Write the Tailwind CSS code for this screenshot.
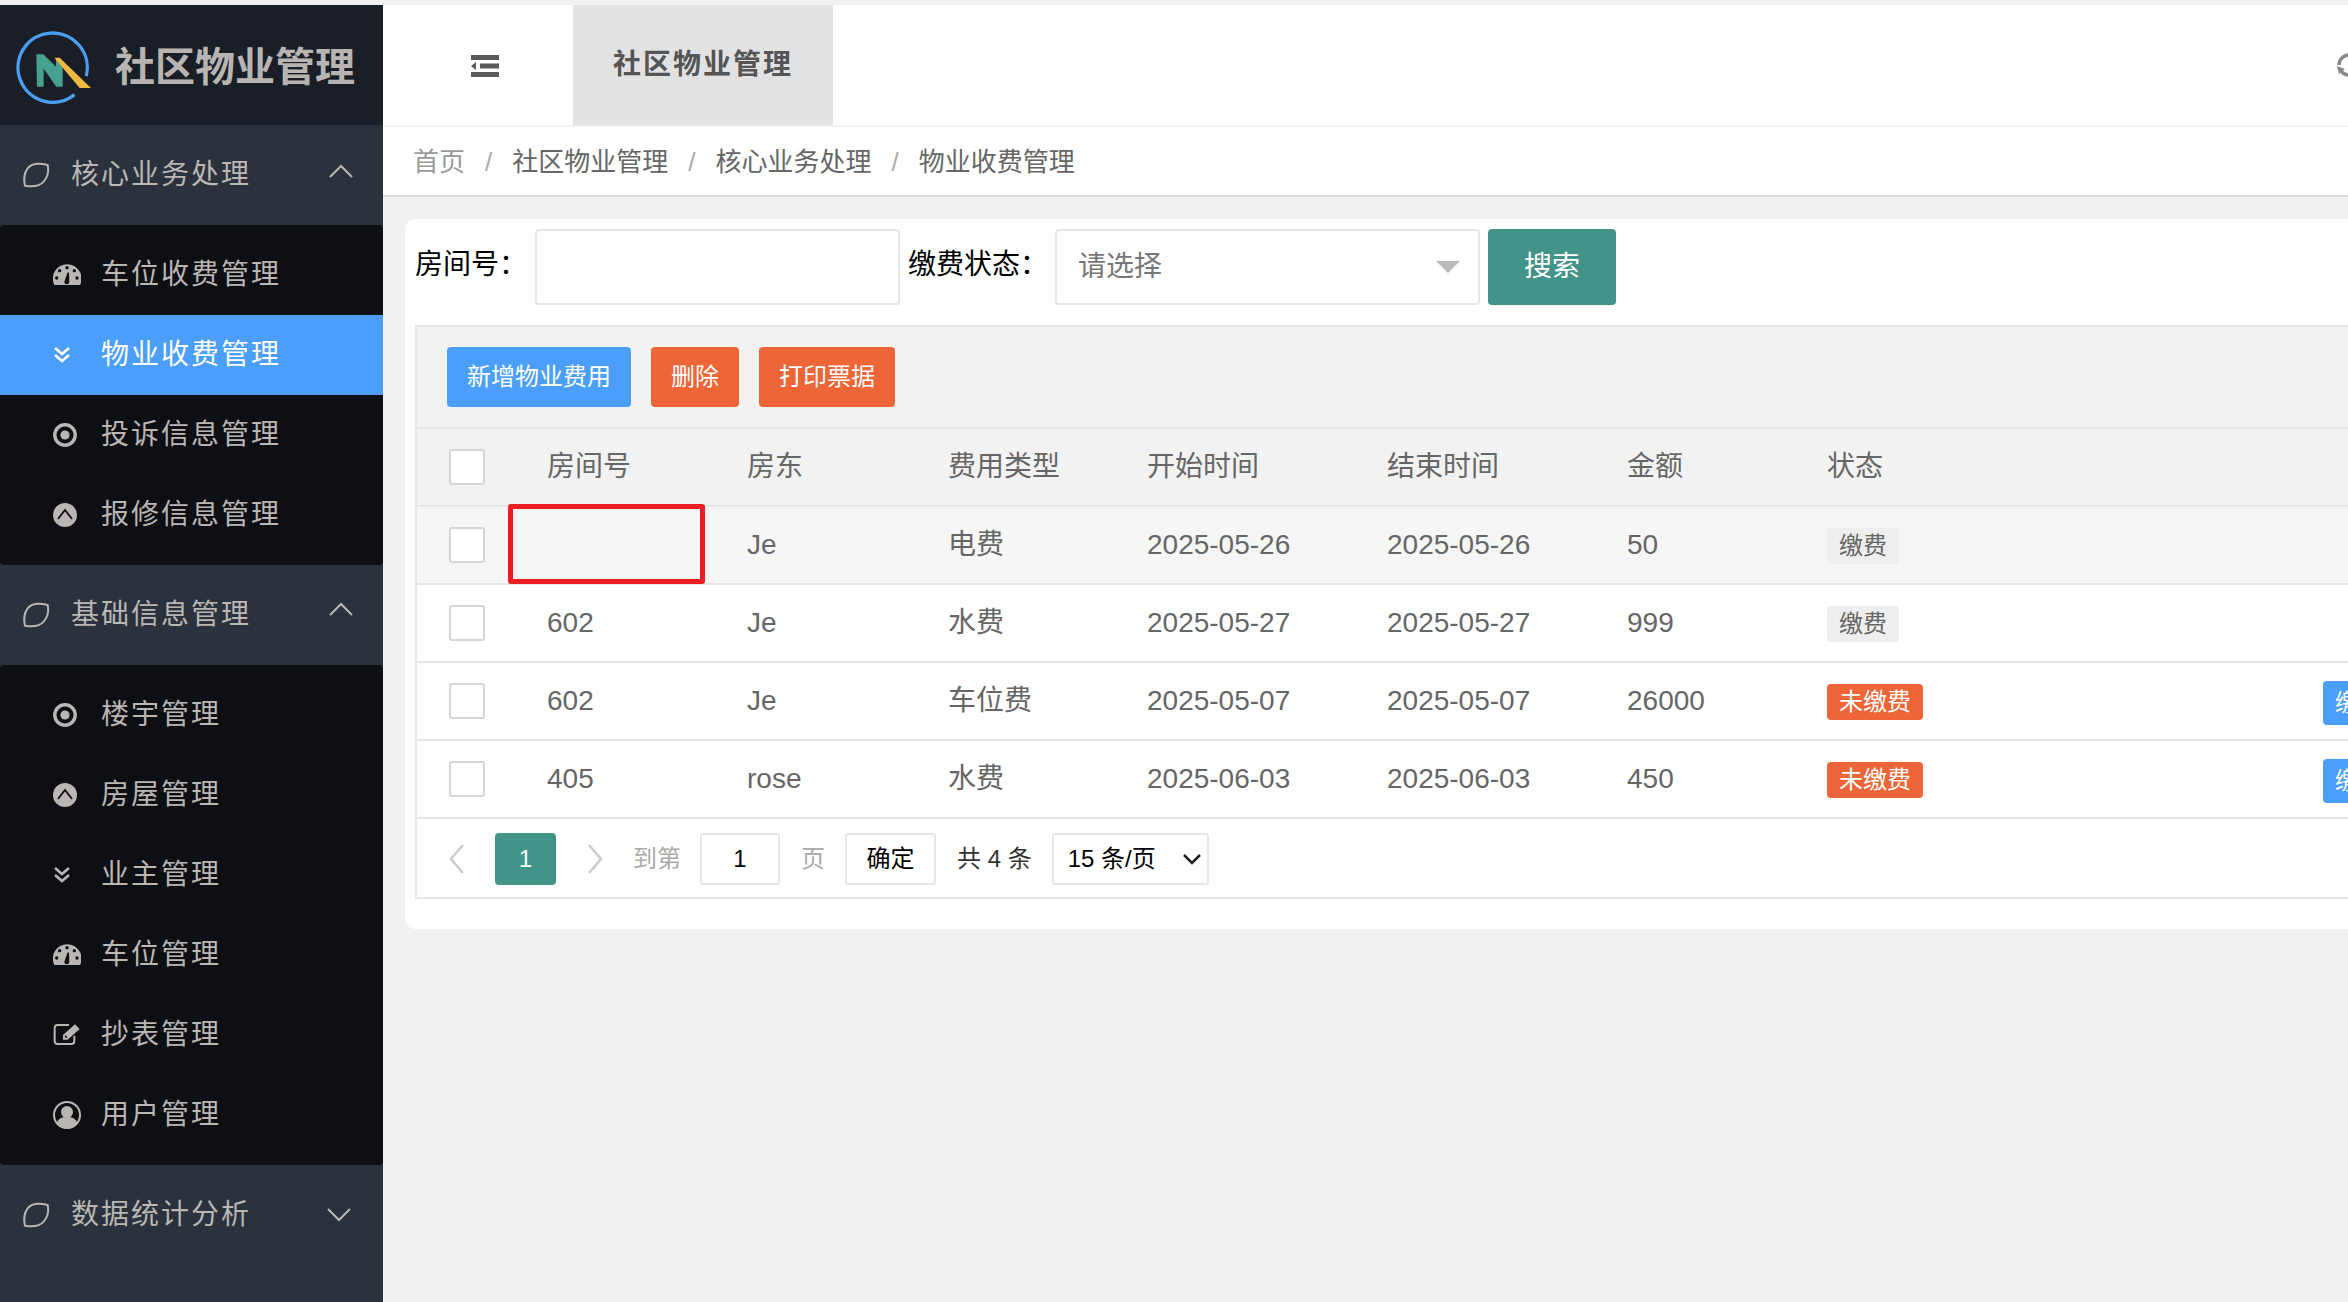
<!DOCTYPE html>
<html lang="zh-CN">
<head>
  <meta charset="UTF-8" />
  <title>社区物业管理</title>
  <script src="https://cdn.jsdelivr.net/npm/@tailwindcss/browser@4"></script>
</head>
<body class="w-[2348px] h-[1302px] overflow-hidden bg-[#f1f1f1] pt-[5px] font-['Liberation_Sans','Noto_Sans_CJK_SC',sans-serif] text-[28px] text-[#666]">

  <!-- icons -->
  <svg class="hidden">
    <symbol id="i-leaf" viewBox="0 0 120 120">
      <path d="M98 30C75 24 50 24 38 40C26 56 26 75 30 92C52 96 72 96 86 80C98 66 102 48 98 30Z" fill="none" stroke="currentColor" stroke-width="6" />
    </symbol>
    <symbol id="i-gauge" viewBox="25 18 84 84">
      <path d="M29 90A43 43 0 1 1 106 90Z" fill="currentColor" />
      <g fill="#0e0f13">
        <circle cx="36" cy="69" r="5" /><circle cx="45" cy="47" r="5" /><circle cx="67" cy="38" r="5" /><circle cx="89" cy="47" r="5" /><circle cx="97" cy="69" r="5" />
        <path d="M59 80L69 52L73 53L74 80A7.5 7.5 0 0 1 59 80Z" />
      </g>
    </symbol>
    <symbol id="i-down" viewBox="0 0 28 28">
      <path d="M2 7L9 13L16 7M2 14L9 20L16 14" fill="none" stroke="currentColor" stroke-width="2.6" />
    </symbol>
    <symbol id="i-dot" viewBox="0 0 28 28">
      <circle cx="12" cy="14" r="10.2" fill="none" stroke="currentColor" stroke-width="3.4" />
      <circle cx="12" cy="14" r="4.6" fill="currentColor" />
    </symbol>
    <symbol id="i-up" viewBox="0 0 28 28">
      <circle cx="12" cy="14" r="12" fill="currentColor" />
      <path d="M5 18L12 9L19 18" fill="none" stroke="#0e0f13" stroke-width="1.8" />
    </symbol>
    <symbol id="i-edit" viewBox="24 28 84 84">
      <path d="M88 72V88Q88 97 79 97H38Q29 97 29 88V49Q29 40 38 40H72" fill="none" stroke="currentColor" stroke-width="6" />
      <path d="M54 70L90 38L104 52L68 84H54Z" fill="currentColor" />
      <path d="M60 72L66 78" stroke="#0e0f13" stroke-width="4" />
    </symbol>
    <symbol id="i-user" viewBox="25 270 84 84">
      <circle cx="67" cy="312" r="39" fill="none" stroke="currentColor" stroke-width="6" />
      <circle cx="67" cy="303" r="18" fill="currentColor" />
      <path d="M36 338C40 322 52 318 67 318C82 318 94 322 98 338A39 39 0 0 1 36 338Z" fill="currentColor" />
    </symbol>
  </svg>

  <div class="flex h-[1297px]">
    <!-- sidebar -->
    <aside class="w-[383px] shrink-0 bg-[#2b323d] text-[#b9b6b3] tracking-[2px]">
      <div class="h-[120px] bg-[#1a1f27] flex items-center relative">
        <svg class="w-[90px] h-[85px] ml-[11px] mt-[7px]" viewBox="0 0 270 255">
          <path d="M225.900 150.200A104 104 0 1 0 190.400 205.800" fill="none" stroke="#4a9ff5" stroke-width="10" />
          <path d="M76 85H97L135 122V95L155 112V182H136L98 128V182H78Z" fill="#46a18f" />
          <path d="M130 95H146L240 186H206Z" fill="#f0b93f" />
        </svg>
        <span class="ml-[14px] mt-[3px] text-[40px] leading-none font-bold tracking-normal text-[#b7b4b1]">社区物业管理</span>
      </div>

      <div class="h-[100px] flex items-center pl-[15px]">
        <svg class="w-[40px] h-[40px] shrink-0"><use href="#i-leaf" /></svg>
        <span class="ml-[16px]">核心业务处理</span>
        <svg class="w-[24px] h-[14px] ml-auto mr-[30px] -mt-[9px]" viewBox="0 0 24 14"><path d="M1 13L12 2L23 13" fill="none" stroke="currentColor" stroke-width="2" /></svg>
      </div>
      <ul class="bg-[#0e0f13] py-[10px] rounded-[4px]">
        <li class="h-[80px] flex items-center pl-[53px] gap-[20px]"><svg class="w-[28px] h-[28px] shrink-0"><use href="#i-gauge" /></svg>车位收费管理</li>
        <li class="h-[80px] flex items-center pl-[53px] gap-[20px] bg-[#4b9ffa] text-white"><svg class="w-[28px] h-[28px] shrink-0"><use href="#i-down" /></svg>物业收费管理</li>
        <li class="h-[80px] flex items-center pl-[53px] gap-[20px]"><svg class="w-[28px] h-[28px] shrink-0"><use href="#i-dot" /></svg>投诉信息管理</li>
        <li class="h-[80px] flex items-center pl-[53px] gap-[20px]"><svg class="w-[28px] h-[28px] shrink-0"><use href="#i-up" /></svg>报修信息管理</li>
      </ul>

      <div class="h-[100px] flex items-center pl-[15px]">
        <svg class="w-[40px] h-[40px] shrink-0"><use href="#i-leaf" /></svg>
        <span class="ml-[16px]">基础信息管理</span>
        <svg class="w-[24px] h-[14px] ml-auto mr-[30px] -mt-[12px]" viewBox="0 0 24 14"><path d="M1 13L12 2L23 13" fill="none" stroke="currentColor" stroke-width="2" /></svg>
      </div>
      <ul class="bg-[#0e0f13] py-[10px] rounded-[4px]">
        <li class="h-[80px] flex items-center pl-[53px] gap-[20px]"><svg class="w-[28px] h-[28px] shrink-0"><use href="#i-dot" /></svg>楼宇管理</li>
        <li class="h-[80px] flex items-center pl-[53px] gap-[20px]"><svg class="w-[28px] h-[28px] shrink-0"><use href="#i-up" /></svg>房屋管理</li>
        <li class="h-[80px] flex items-center pl-[53px] gap-[20px]"><svg class="w-[28px] h-[28px] shrink-0"><use href="#i-down" /></svg>业主管理</li>
        <li class="h-[80px] flex items-center pl-[53px] gap-[20px]"><svg class="w-[28px] h-[28px] shrink-0"><use href="#i-gauge" /></svg>车位管理</li>
        <li class="h-[80px] flex items-center pl-[53px] gap-[20px]"><svg class="w-[28px] h-[28px] shrink-0"><use href="#i-edit" /></svg>抄表管理</li>
        <li class="h-[80px] flex items-center pl-[53px] gap-[20px]"><svg class="w-[28px] h-[28px] shrink-0"><use href="#i-user" /></svg>用户管理</li>
      </ul>

      <div class="h-[100px] flex items-center pl-[15px]">
        <svg class="w-[40px] h-[40px] shrink-0"><use href="#i-leaf" /></svg>
        <span class="ml-[16px]">数据统计分析</span>
        <svg class="w-[24px] h-[14px] ml-auto mr-[32px]" viewBox="0 0 24 14"><path d="M1 1L12 12L23 1" fill="none" stroke="currentColor" stroke-width="2" /></svg>
      </div>
    </aside>

    <!-- main -->
    <main class="flex-1 min-w-0 overflow-hidden">
      <div class="h-[122px] bg-white border-b-2 border-[#f2f2f2] flex items-stretch">
        <div class="w-[190px] flex items-center pl-[88px]">
          <svg class="w-[28px] h-[22px] mt-[2px] text-[#5a5a5a]" viewBox="0 0 28 22">
            <path d="M0 0H28V5H0ZM9 8.500H28V13.500H9ZM0 17H28V22H0Z" fill="currentColor" />
            <path d="M5 7V15L0 11Z" fill="currentColor" />
          </svg>
        </div>
        <div class="w-[260px] h-[120px] bg-[#e2e2e2] flex items-center justify-center font-bold text-[#555] tracking-[2px]">社区物业管理</div>
        <div class="ml-auto h-[120px] flex items-center">
          <svg class="w-[24px] h-[24px] -mr-[13px]" viewBox="0 0 24 24">
            <path d="M2 12A10 10 0 0 1 20 6M22 12A10 10 0 0 1 4 18" fill="none" stroke="#888" stroke-width="3.500" />
            <path d="M0 13L2 21L8 16Z" fill="#888" />
          </svg>
        </div>
      </div>

      <div class="h-[70px] bg-white border-b-2 border-[#ddd] flex items-center pl-[30px] text-[26px] pt-[2px]">
        <span class="text-[#999]">首页</span>
        <span class="mx-[20px] text-[#aaa]">/</span>
        <span>社区物业管理</span>
        <span class="mx-[20px] text-[#aaa]">/</span>
        <span>核心业务处理</span>
        <span class="mx-[20px] text-[#aaa]">/</span>
        <span>物业收费管理</span>
      </div>

      <section class="ml-[22px] mt-[22px] w-[2100px] bg-white rounded-[10px] pt-[10px] px-[10px] pb-[30px]">
        <form class="flex items-center h-[76px] mb-[20px]">
          <label class="w-[120px] text-black -mt-[4px]">房间号：</label>
          <input type="text" class="w-[365px] h-[76px] border-2 border-[#e6e6e6] rounded-[4px]" />
          <label class="w-[147px] ml-[8px] text-black -mt-[4px]">缴费状态：</label>
          <div class="w-[425px] h-[76px] border-2 border-[#e6e6e6] rounded-[4px] flex items-center justify-between pl-[21px] pr-[18px] text-[#777]">
            请选择
            <svg class="w-[24px] h-[12px]" viewBox="0 0 24 12"><path d="M0 0H24L12 12Z" fill="#bbb" /></svg>
          </div>
          <button type="button" class="ml-[8px] w-[128px] h-[76px] bg-[#429488] text-white rounded-[4px]">搜索</button>
        </form>

        <div class="border-2 border-[#e6e6e6]">
          <div class="h-[102px] bg-[#f2f2f2] border-b-2 border-[#e6e6e6] pt-[20px] pl-[30px] flex items-start gap-[20px] text-[24px] text-white">
            <button type="button" class="w-[184px] h-[60px] bg-[#4b9ffa] rounded-[4px]">新增物业费用</button>
            <button type="button" class="w-[88px] h-[60px] bg-[#ee6537] rounded-[4px]">删除</button>
            <button type="button" class="w-[136px] h-[60px] bg-[#ee6537] rounded-[4px]">打印票据</button>
          </div>

          <table class="table-fixed w-[2096px] border-separate border-spacing-0">
            <colgroup>
              <col class="w-[106px]" /><col class="w-[200px]" /><col class="w-[201px]" /><col class="w-[199px]" /><col class="w-[240px]" /><col class="w-[240px]" /><col class="w-[200px]" /><col class="w-[496px]" /><col class="w-[214px]" />
            </colgroup>
            <thead class="bg-[#f2f2f2] text-left">
              <tr>
                <th class="h-[78px] border-b-2 border-[#e6e6e6] pl-[32px]"><input type="checkbox" class="block appearance-none w-[36px] h-[36px] bg-white border-2 border-[#d5d5d5] rounded-[3px]" /></th>
                <th class="h-[78px] border-b-2 border-[#e6e6e6] px-[24px] font-normal">房间号</th>
                <th class="h-[78px] border-b-2 border-[#e6e6e6] px-[24px] font-normal">房东</th>
                <th class="h-[78px] border-b-2 border-[#e6e6e6] px-[24px] font-normal">费用类型</th>
                <th class="h-[78px] border-b-2 border-[#e6e6e6] px-[24px] font-normal">开始时间</th>
                <th class="h-[78px] border-b-2 border-[#e6e6e6] px-[24px] font-normal">结束时间</th>
                <th class="h-[78px] border-b-2 border-[#e6e6e6] px-[24px] font-normal">金额</th>
                <th class="h-[78px] border-b-2 border-[#e6e6e6] px-[24px] font-normal">状态</th>
                <th class="h-[78px] border-b-2 border-[#e6e6e6]"></th>
                <th class="h-[78px] border-b-2 border-[#e6e6e6]"></th>
              </tr>
            </thead>
            <tbody>
              <tr class="bg-[#f6f6f6]">
                <td class="h-[78px] border-b-2 border-[#e6e6e6] pl-[32px]"><input type="checkbox" class="block appearance-none w-[36px] h-[36px] bg-white border-2 border-[#d5d5d5] rounded-[3px]" /></td>
                <td class="h-[78px] border-b-2 border-[#e6e6e6] px-[24px] relative"><span class="absolute left-[-15px] top-[-3px] w-[197px] h-[80px] border-[5px] border-[#ed1c24] rounded-[3px]"></span></td>
                <td class="h-[78px] border-b-2 border-[#e6e6e6] px-[24px]">Je</td>
                <td class="h-[78px] border-b-2 border-[#e6e6e6] px-[24px]">电费</td>
                <td class="h-[78px] border-b-2 border-[#e6e6e6] px-[24px]">2025-05-26</td>
                <td class="h-[78px] border-b-2 border-[#e6e6e6] px-[24px]">2025-05-26</td>
                <td class="h-[78px] border-b-2 border-[#e6e6e6] px-[24px]">50</td>
                <td class="h-[78px] border-b-2 border-[#e6e6e6] px-[24px]"><span class="inline-flex items-center h-[36px] px-[12px] bg-[#eee] rounded-[4px] text-[24px]">缴费</span></td>
                <td class="h-[78px] border-b-2 border-[#e6e6e6]"></td>
                <td class="h-[78px] border-b-2 border-[#e6e6e6]"></td>
              </tr>
              <tr>
                <td class="h-[78px] border-b-2 border-[#e6e6e6] pl-[32px]"><input type="checkbox" class="block appearance-none w-[36px] h-[36px] bg-white border-2 border-[#d5d5d5] rounded-[3px]" /></td>
                <td class="h-[78px] border-b-2 border-[#e6e6e6] px-[24px]">602</td>
                <td class="h-[78px] border-b-2 border-[#e6e6e6] px-[24px]">Je</td>
                <td class="h-[78px] border-b-2 border-[#e6e6e6] px-[24px]">水费</td>
                <td class="h-[78px] border-b-2 border-[#e6e6e6] px-[24px]">2025-05-27</td>
                <td class="h-[78px] border-b-2 border-[#e6e6e6] px-[24px]">2025-05-27</td>
                <td class="h-[78px] border-b-2 border-[#e6e6e6] px-[24px]">999</td>
                <td class="h-[78px] border-b-2 border-[#e6e6e6] px-[24px]"><span class="inline-flex items-center h-[36px] px-[12px] bg-[#eee] rounded-[4px] text-[24px]">缴费</span></td>
                <td class="h-[78px] border-b-2 border-[#e6e6e6]"></td>
                <td class="h-[78px] border-b-2 border-[#e6e6e6]"></td>
              </tr>
              <tr>
                <td class="h-[78px] border-b-2 border-[#e6e6e6] pl-[32px]"><input type="checkbox" class="block appearance-none w-[36px] h-[36px] bg-white border-2 border-[#d5d5d5] rounded-[3px]" /></td>
                <td class="h-[78px] border-b-2 border-[#e6e6e6] px-[24px]">602</td>
                <td class="h-[78px] border-b-2 border-[#e6e6e6] px-[24px]">Je</td>
                <td class="h-[78px] border-b-2 border-[#e6e6e6] px-[24px]">车位费</td>
                <td class="h-[78px] border-b-2 border-[#e6e6e6] px-[24px]">2025-05-07</td>
                <td class="h-[78px] border-b-2 border-[#e6e6e6] px-[24px]">2025-05-07</td>
                <td class="h-[78px] border-b-2 border-[#e6e6e6] px-[24px]">26000</td>
                <td class="h-[78px] border-b-2 border-[#e6e6e6] px-[24px]"><span class="inline-flex items-center h-[36px] px-[12px] bg-[#ee6537] rounded-[4px] text-[24px] text-white">未缴费</span></td>
                <td class="h-[78px] border-b-2 border-[#e6e6e6] px-[24px]"><button type="button" class="block mt-[4px] h-[44px] w-[72px] bg-[#4b9ffa] rounded-[4px] text-[24px] text-white">缴费</button></td>
                <td class="h-[78px] border-b-2 border-[#e6e6e6]"></td>
              </tr>
              <tr>
                <td class="h-[78px] border-b-2 border-[#e6e6e6] pl-[32px]"><input type="checkbox" class="block appearance-none w-[36px] h-[36px] bg-white border-2 border-[#d5d5d5] rounded-[3px]" /></td>
                <td class="h-[78px] border-b-2 border-[#e6e6e6] px-[24px]">405</td>
                <td class="h-[78px] border-b-2 border-[#e6e6e6] px-[24px]">rose</td>
                <td class="h-[78px] border-b-2 border-[#e6e6e6] px-[24px]">水费</td>
                <td class="h-[78px] border-b-2 border-[#e6e6e6] px-[24px]">2025-06-03</td>
                <td class="h-[78px] border-b-2 border-[#e6e6e6] px-[24px]">2025-06-03</td>
                <td class="h-[78px] border-b-2 border-[#e6e6e6] px-[24px]">450</td>
                <td class="h-[78px] border-b-2 border-[#e6e6e6] px-[24px]"><span class="inline-flex items-center h-[36px] px-[12px] bg-[#ee6537] rounded-[4px] text-[24px] text-white">未缴费</span></td>
                <td class="h-[78px] border-b-2 border-[#e6e6e6] px-[24px]"><button type="button" class="block mt-[4px] h-[44px] w-[72px] bg-[#4b9ffa] rounded-[4px] text-[24px] text-white">缴费</button></td>
                <td class="h-[78px] border-b-2 border-[#e6e6e6]"></td>
              </tr>
            </tbody>
          </table>

          <!-- pagination -->
          <div class="h-[78px] flex items-center text-[24px] pt-[2px]">
            <svg class="ml-[32px] w-[16px] h-[32px] shrink-0" viewBox="0 0 16 32"><path d="M14 2L2 16L14 30" fill="none" stroke="#ccc" stroke-width="2.5" /></svg>
            <span class="ml-[30px] w-[61px] h-[52px] flex items-center justify-center bg-[#429488] text-white rounded-[4px]">1</span>
            <svg class="ml-[31px] w-[16px] h-[32px] shrink-0" viewBox="0 0 16 32"><path d="M2 2L14 16L2 30" fill="none" stroke="#ccc" stroke-width="2.5" /></svg>
            <span class="ml-[30px] text-[#aaa]">到第</span>
            <input type="text" value="1" class="ml-[19px] w-[80px] h-[52px] border-2 border-[#e6e6e6] rounded-[3px] text-center text-black" />
            <span class="ml-[21px] text-[#aaa]">页</span>
            <button type="button" class="ml-[20px] w-[91px] h-[52px] border-2 border-[#e6e6e6] rounded-[3px] text-black">确定</button>
            <span class="ml-[21px] text-[#333]">共 4 条</span>
            <div class="ml-[20px] w-[157px] h-[52px] border-2 border-[#e6e6e6] rounded-[3px] flex items-center justify-between pl-[14px] pr-[5px] text-black">
              15 条/页
              <svg class="w-[20px] h-[12px]" viewBox="0 0 20 12"><path d="M2 2L10 10L18 2" fill="none" stroke="#222" stroke-width="2.5" /></svg>
            </div>
          </div>
        </div>
      </section>
    </main>
  </div>
</body>
</html>
